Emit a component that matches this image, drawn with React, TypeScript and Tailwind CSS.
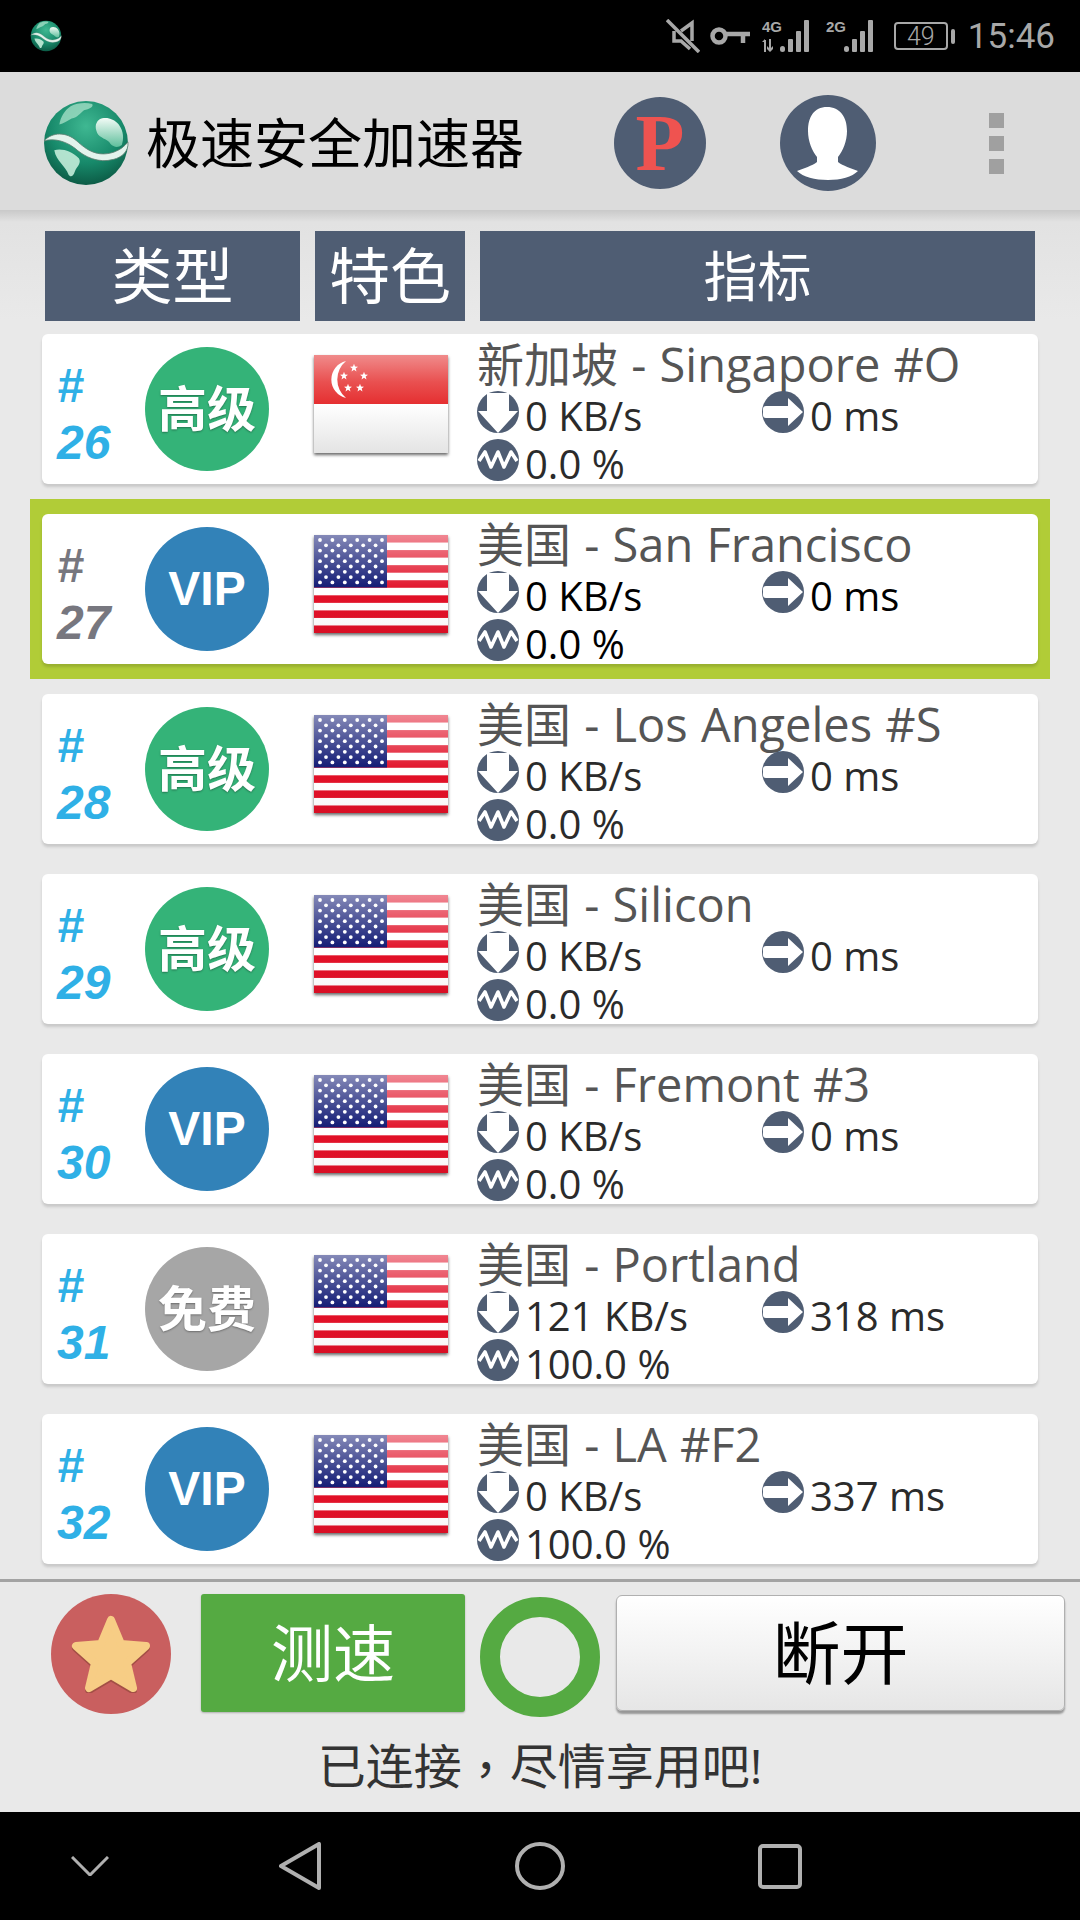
const servers = [
  { num: 26, kind: 'pro', flag: 'sg', title: '新加坡 - Singapore #O', speed: '0 KB/s', ping: '0 ms', load: '0.0 %' },
  { num: 27, kind: 'vip', flag: 'us', title: '美国 - San Francisco', speed: '0 KB/s', ping: '0 ms', load: '0.0 %', selected: true },
  { num: 28, kind: 'pro', flag: 'us', title: '美国 - Los Angeles #S', speed: '0 KB/s', ping: '0 ms', load: '0.0 %' },
  { num: 29, kind: 'pro', flag: 'us', title: '美国 - Silicon', speed: '0 KB/s', ping: '0 ms', load: '0.0 %' },
  { num: 30, kind: 'vip', flag: 'us', title: '美国 - Fremont #3', speed: '0 KB/s', ping: '0 ms', load: '0.0 %' },
  { num: 31, kind: 'free', flag: 'us', title: '美国 - Portland', speed: '121 KB/s', ping: '318 ms', load: '100.0 %' },
  { num: 32, kind: 'vip', flag: 'us', title: '美国 - LA #F2', speed: '0 KB/s', ping: '337 ms', load: '100.0 %' },
]

function Globe({ size }: { size: number }) {
  return (
    <svg width={size} height={size} viewBox="0 0 86 86">
      <defs>
        <radialGradient id="globeFill" cx="0.5" cy="0.3" r="0.8">
          <stop offset="0" stopColor="#3fb892" />
          <stop offset="0.55" stopColor="#17896a" />
          <stop offset="1" stopColor="#084a38" />
        </radialGradient>
        <linearGradient id="landTop" x1="0" y1="0" x2="0" y2="1">
          <stop offset="0" stopColor="#f2fbf6" />
          <stop offset="1" stopColor="#5fbf9c" />
        </linearGradient>
      </defs>
      <circle cx="43" cy="43" r="41" fill="url(#globeFill)" />
      <path d="M56 20c6-3 14-1 19 5 5 7 5 14 3 20-4 3-8 2-11-1-2-4-8-5-12-9-3-5-4-11 1-15z" fill="url(#landTop)" />
      <path d="M28 7c6-3 15-4 21-2 2 3-3 5-8 6-4 3-6 7-12 8-4 2-8 5-12 6 1-7 5-14 11-18z" fill="#a9e2c9" opacity="0.75" />
      <path d="M12 50c8-2 17 1 24 8 3 5-2 8-4 13-1 4-4 6-6 3-3-9-12-13-14-24z" fill="#c3ecd9" opacity="0.9" />
      <path d="M2 41c8-9 22-9 32 0s20 16 36 11c6-2 11-6 14-10 1 9-6 15-14 17-15 4-28-2-38-11-9-7-21-10-30-7z" fill="#e3f3ec" stroke="#5f7f72" strokeWidth="0.8" />
    </svg>
  )
}

function UsFlag() {
  const stars = []
  for (let r = 0; r < 9; r++) {
    const count = r % 2 === 0 ? 6 : 5
    for (let c = 0; c < count; c++) {
      stars.push(<circle key={`${r}-${c}`} cx={(r % 2 === 0 ? 6 : 12) + c * 12.4} cy={5 + r * 5.3} r="1.9" fill="#fff" />)
    }
  }
  return (
    <svg width="134" height="98" viewBox="0 0 134 98" className="shadow-[0_2px_3px_rgba(0,0,0,0.6)]">
      <defs>
        <linearGradient id="usGloss" x1="0" y1="0" x2="0" y2="1">
          <stop offset="0" stopColor="#fff" stopOpacity="0.5" />
          <stop offset="0.58" stopColor="#fff" stopOpacity="0" />
          <stop offset="1" stopColor="#000" stopOpacity="0.04" />
        </linearGradient>
      </defs>
      <rect width="134" height="98" fill="#fff" />
      {[0, 2, 4, 6, 8, 10, 12].map((i) => (
        <rect key={i} y={i * 7.54} width="134" height="7.54" fill="#e10f26" />
      ))}
      <rect width="73" height="52.5" fill="#0a1370" />
      {stars}
      <rect width="134" height="98" fill="url(#usGloss)" />
    </svg>
  )
}

function Star5({ cx, cy, r }: { cx: number; cy: number; r: number }) {
  const pts = []
  for (let i = 0; i < 10; i++) {
    const rad = i % 2 === 0 ? r : r * 0.42
    const a = -Math.PI / 2 + (i * Math.PI) / 5
    pts.push(`${cx + rad * Math.cos(a)},${cy + rad * Math.sin(a)}`)
  }
  return <polygon points={pts.join(' ')} fill="#fff" />
}

function SgFlag() {
  return (
    <svg width="134" height="98" viewBox="0 0 134 98" className="shadow-[0_2px_3px_rgba(0,0,0,0.6)]">
      <defs>
        <linearGradient id="sgRed" x1="0" y1="0" x2="0" y2="1">
          <stop offset="0" stopColor="#f08b8b" />
          <stop offset="0.55" stopColor="#e95050" />
          <stop offset="1" stopColor="#e52f31" />
        </linearGradient>
        <linearGradient id="sgWhite" x1="0" y1="0" x2="0" y2="1">
          <stop offset="0" stopColor="#fff" />
          <stop offset="1" stopColor="#e4e4e4" />
        </linearGradient>
      </defs>
      <rect width="134" height="49" fill="url(#sgRed)" />
      <rect y="49" width="134" height="49" fill="url(#sgWhite)" />
      <path d="M32 6A19 19 0 0 0 32 43A24 24 0 0 1 32 6z" fill="#fff" />
      <Star5 cx={40} cy={13} r={4.2} />
      <Star5 cx={50} cy={21} r={4.2} />
      <Star5 cx={30} cy={21} r={4.2} />
      <Star5 cx={34} cy={33} r={4.2} />
      <Star5 cx={46} cy={33} r={4.2} />
    </svg>
  )
}

function DownIcon() {
  return (
    <svg width="42" height="42" viewBox="0 0 42 42" className="shrink-0">
      <circle cx="21" cy="21" r="21" fill="#4f5d73" />
      <path d="M10 2h22v18h9L21 42 1 20h9z" fill="#fff" />
    </svg>
  )
}

function PingIcon() {
  return (
    <svg width="42" height="42" viewBox="0 0 42 42" className="shrink-0">
      <circle cx="21" cy="21" r="21" fill="#4f5d73" />
      <path d="M4 15h22V7l15 14-15 14v-8H4a3 3 0 0 1-3-3v-6a3 3 0 0 1 3-3z" fill="#fff" />
    </svg>
  )
}

function WaveIcon() {
  return (
    <svg width="42" height="42" viewBox="0 0 42 42" className="shrink-0">
      <circle cx="21" cy="21" r="21" fill="#4f5d73" />
      <path d="M2 22l6-9 6 15 7-15 6 15 7-15 6 9" fill="none" stroke="#fff" strokeWidth="3.6" strokeLinejoin="round" />
    </svg>
  )
}

function Badge({ kind }: { kind: string }) {
  if (kind === 'vip') {
    return (
      <div className="w-[124px] h-[124px] shrink-0 rounded-full bg-[#3282b8] flex items-center justify-center text-white font-bold text-[48px] font-['Liberation_Sans',sans-serif]">
        VIP
      </div>
    )
  }
  if (kind === 'free') {
    return (
      <div className="w-[124px] h-[124px] shrink-0 rounded-full bg-[#a6a6a6] flex items-center justify-center text-white font-bold text-[49px] [text-shadow:0_1px_2px_rgba(0,0,0,0.35)]">
        免费
      </div>
    )
  }
  return (
    <div className="w-[124px] h-[124px] shrink-0 rounded-full bg-[#34b378] flex items-center justify-center text-white font-bold text-[49px] [text-shadow:0_1px_2px_rgba(0,0,0,0.35)]">
      高级
    </div>
  )
}

function ServerRow({ server }: { server: (typeof servers)[number] }) {
  return (
    <div className={server.selected ? 'h-[180px] px-[12px] py-[15px] bg-[#b1cc37]' : 'h-[180px] px-[12px] py-[15px]'}>
      <div className="h-[150px] bg-white rounded-[6px] shadow-[0_3px_3px_rgba(0,0,0,0.14)] flex items-center">
        <div
          className={
            server.selected
              ? "w-[103px] shrink-0 pl-[15px] pt-[10px] font-['Liberation_Sans',sans-serif] font-bold italic text-[48px] leading-[57px] text-[#77777f]"
              : "w-[103px] shrink-0 pl-[15px] pt-[10px] font-['Liberation_Sans',sans-serif] font-bold italic text-[48px] leading-[57px] text-[#2fb0e6]"
          }
        >
          <div>#</div>
          <div>{server.num}</div>
        </div>
        <Badge kind={server.kind} />
        <div className="ml-[45px] -mt-[10px] shrink-0 flex">
          {server.flag === 'sg' ? <SgFlag /> : <UsFlag />}
        </div>
        <div className={server.selected ? 'ml-[29px] flex-1 self-start text-black' : 'ml-[29px] flex-1 self-start text-[#2b2b2b]'}>
          <div className="h-[57px] text-[47px] leading-[61px] [word-spacing:1px] text-[#555555] whitespace-nowrap">{server.title}</div>
          <div className="h-[42px] flex items-center text-[40px] leading-none">
            <div className="w-[285px] flex items-center">
              <DownIcon />
              <span className="ml-[6px] mt-[8px]">{server.speed}</span>
            </div>
            <PingIcon />
            <span className="ml-[6px] mt-[8px]">{server.ping}</span>
          </div>
          <div className="mt-[6px] h-[42px] flex items-center text-[40px] leading-none">
            <WaveIcon />
            <span className="ml-[6px] mt-[8px]">{server.load}</span>
          </div>
        </div>
      </div>
    </div>
  )
}

function Signal({ label, arrows }: { label: string; arrows?: boolean }) {
  return (
    <svg width="52" height="34" viewBox="0 0 52 34" fill="#a8a8a8">
      <text x="0" y="13" fontSize="15" fontWeight="700" fontFamily="Liberation Sans, sans-serif">{label}</text>
      {arrows && <path d="M2 21h2v12H2zM0 23l3-3v3zM7 20h2v9l2-2v3l-3 3-3-3v-3l2 2z" />}
      <rect x={18} y={27} width="5" height="6" rx="2.5" />
      <rect x={26} y={20} width="5" height="13" rx="1" />
      <rect x={34} y={12} width="5" height="21" rx="1" />
      <rect x={42} y={1} width="5" height="32" rx="1" />
    </svg>
  )
}

export default function App() {
  return (
    <div className="w-[1080px] h-[1920px] flex flex-col overflow-hidden bg-[#e9e9e9] font-['Open_Sans','Noto_Sans_CJK_SC',sans-serif]">
      {/* Status bar */}
      <div className="h-[72px] shrink-0 bg-black flex items-center pl-[30px] pr-[25px] text-[#a8a8a8]">
        <Globe size={32} />
        <div className="ml-auto flex items-center">
          <svg width="34" height="34" viewBox="0 0 34 34" fill="none" stroke="#a8a8a8" strokeWidth="3.5">
            <path d="M8 12v10h7l9 8M26 22V4l-11 8" />
            <path d="M1 1l32 32" />
          </svg>
          <svg width="40" height="18" viewBox="0 0 40 18" fill="none" stroke="#a8a8a8" className="ml-[10px]">
            <circle cx="9" cy="9" r="6.5" strokeWidth="4.5" />
            <path d="M16 7h24M33 7v9" strokeWidth="4.5" />
          </svg>
          <div className="ml-[12px] flex">
            <Signal label="4G" arrows />
          </div>
          <div className="ml-[12px] flex">
            <Signal label="2G" />
          </div>
          <div className="ml-[16px] w-[54px] h-[28px] border-2 border-[#a8a8a8] rounded-[4px] flex items-center justify-center text-[25px] leading-none font-['Roboto',sans-serif] font-light">
            49
          </div>
          <div className="ml-[3px] w-[4px] h-[15px] rounded-[2px] bg-[#a8a8a8]" />
          <span className="ml-[13px] text-[35px] leading-none font-['Roboto',sans-serif]">15:46</span>
        </div>
      </div>

      {/* Toolbar */}
      <div className="h-[138px] shrink-0 bg-[#dcdcdc] flex items-center pl-[42px] pt-[4px]">
        <Globe size={88} />
        <span className="ml-[16px] text-[54px] leading-none text-black">极速安全加速器</span>
        <div className="ml-[90px] w-[92px] h-[92px] rounded-full bg-[#4f5d73] flex items-center justify-center font-['Liberation_Serif',serif] font-bold text-[80px] leading-none text-[#ef5350]">
          P
        </div>
        <div className="ml-[74px] w-[96px] h-[96px] rounded-full bg-[#4f5d73] overflow-hidden flex">
          <svg width="96" height="96" viewBox="0 0 96 96">
            <path d="M47 12c13 0 20 10 20 24 0 10-4 20-9 26v5c5 4 13 6 20 9-6 6-17 9-30 9s-25-3-31-9c7-3 15-5 20-9v-5c-5-6-9-16-9-26 0-14 6-24 19-24z" fill="#fff" />
          </svg>
        </div>
        <div className="ml-[113px] flex flex-col gap-[8px]">
          <div className="w-[15px] h-[15px] bg-[#a0a0a0]" />
          <div className="w-[15px] h-[15px] bg-[#a0a0a0]" />
          <div className="w-[15px] h-[15px] bg-[#a0a0a0]" />
        </div>
      </div>
      <div className="h-[12px] shrink-0 bg-gradient-to-b from-[#c9c9c9] to-[#e2e2e2]" />

      {/* Column headers */}
      <div className="h-[97px] shrink-0 pt-[9px] pl-[45px] flex bg-gradient-to-b from-[#e2e2e2] to-[#e9e9e9]">
        <div className="w-[255px] h-[90px] bg-[#4f5d73] text-white text-[61px] flex items-center justify-center">类型</div>
        <div className="ml-[15px] w-[150px] h-[90px] bg-[#4f5d73] text-white text-[61px] flex items-center justify-center">特色</div>
        <div className="ml-[15px] w-[555px] h-[90px] bg-[#4f5d73] text-white text-[54px] flex items-center justify-center">指标</div>
      </div>

      {/* Server list */}
      <div className="h-[1260px] shrink-0 px-[30px]">
        {servers.map((server) => (
          <ServerRow key={server.num} server={server} />
        ))}
      </div>

      {/* Bottom controls */}
      <div className="h-[233px] shrink-0 border-t-[3px] border-[#a3a3a3] flex flex-col">
        <div className="pt-[12px] pl-[51px] flex items-start">
          <div className="w-[120px] h-[120px] rounded-full bg-[#c95f5f] flex items-center justify-center">
            <svg width="80" height="78" viewBox="0 0 80 78">
              <path d="M40 5l10 24 25 2-19 17 6 25-22-13-22 13 6-25L5 31l25-2z" fill="#a34f46" transform="translate(0 2)" stroke="#a34f46" strokeWidth="8" strokeLinejoin="round" />
              <path d="M40 5l10 24 25 2-19 17 6 25-22-13-22 13 6-25L5 31l25-2z" fill="#f7cd85" stroke="#f7cd85" strokeWidth="8" strokeLinejoin="round" />
            </svg>
          </div>
          <div className="ml-[30px] w-[264px] h-[118px] rounded-[3px] bg-[#55aa42] shadow-[0_1px_2px_rgba(0,0,0,0.25)] flex items-center justify-center text-white text-[62px]">
            测速
          </div>
          <div className="ml-[15px] mt-[3px] w-[120px] h-[120px] rounded-full border-[20px] border-[#55aa42]" />
          <div className="ml-[16px] mt-[1px] w-[449px] h-[116px] rounded-[6px] border border-[#b0b0b0] bg-gradient-to-b from-white to-[#e6e6e6] shadow-[0_3px_2px_rgba(0,0,0,0.35)] flex items-center justify-center text-black text-[68px]">
            断开
          </div>
        </div>
        <div className="flex-1 flex items-center justify-center text-[48px] leading-none text-[#333333] pt-[3px]">
          已连接<span className="font-['Noto_Sans_CJK_TC',sans-serif]">，</span>尽情享用吧!
        </div>
      </div>

      {/* Navigation bar */}
      <div className="h-[108px] shrink-0 bg-black flex items-center text-[#b0b0b0]">
        <svg width="38" height="20" viewBox="0 0 38 20" fill="none" stroke="currentColor" strokeWidth="3" className="ml-[71px]">
          <path d="M1 1l18 18L37 1" />
        </svg>
        <svg width="42" height="48" viewBox="0 0 42 48" fill="none" stroke="currentColor" strokeWidth="4" strokeLinejoin="round" className="ml-[170px]">
          <path d="M40 2v44L2 24z" />
        </svg>
        <svg width="50" height="48" viewBox="0 0 50 48" fill="none" stroke="currentColor" strokeWidth="4" className="ml-[194px]">
          <ellipse cx="25" cy="24" rx="23" ry="22" />
        </svg>
        <svg width="44" height="45" viewBox="0 0 44 45" fill="none" stroke="currentColor" strokeWidth="4" className="ml-[193px]">
          <rect x="2" y="2" width="40" height="41" rx="3" />
        </svg>
      </div>
    </div>
  )
}
